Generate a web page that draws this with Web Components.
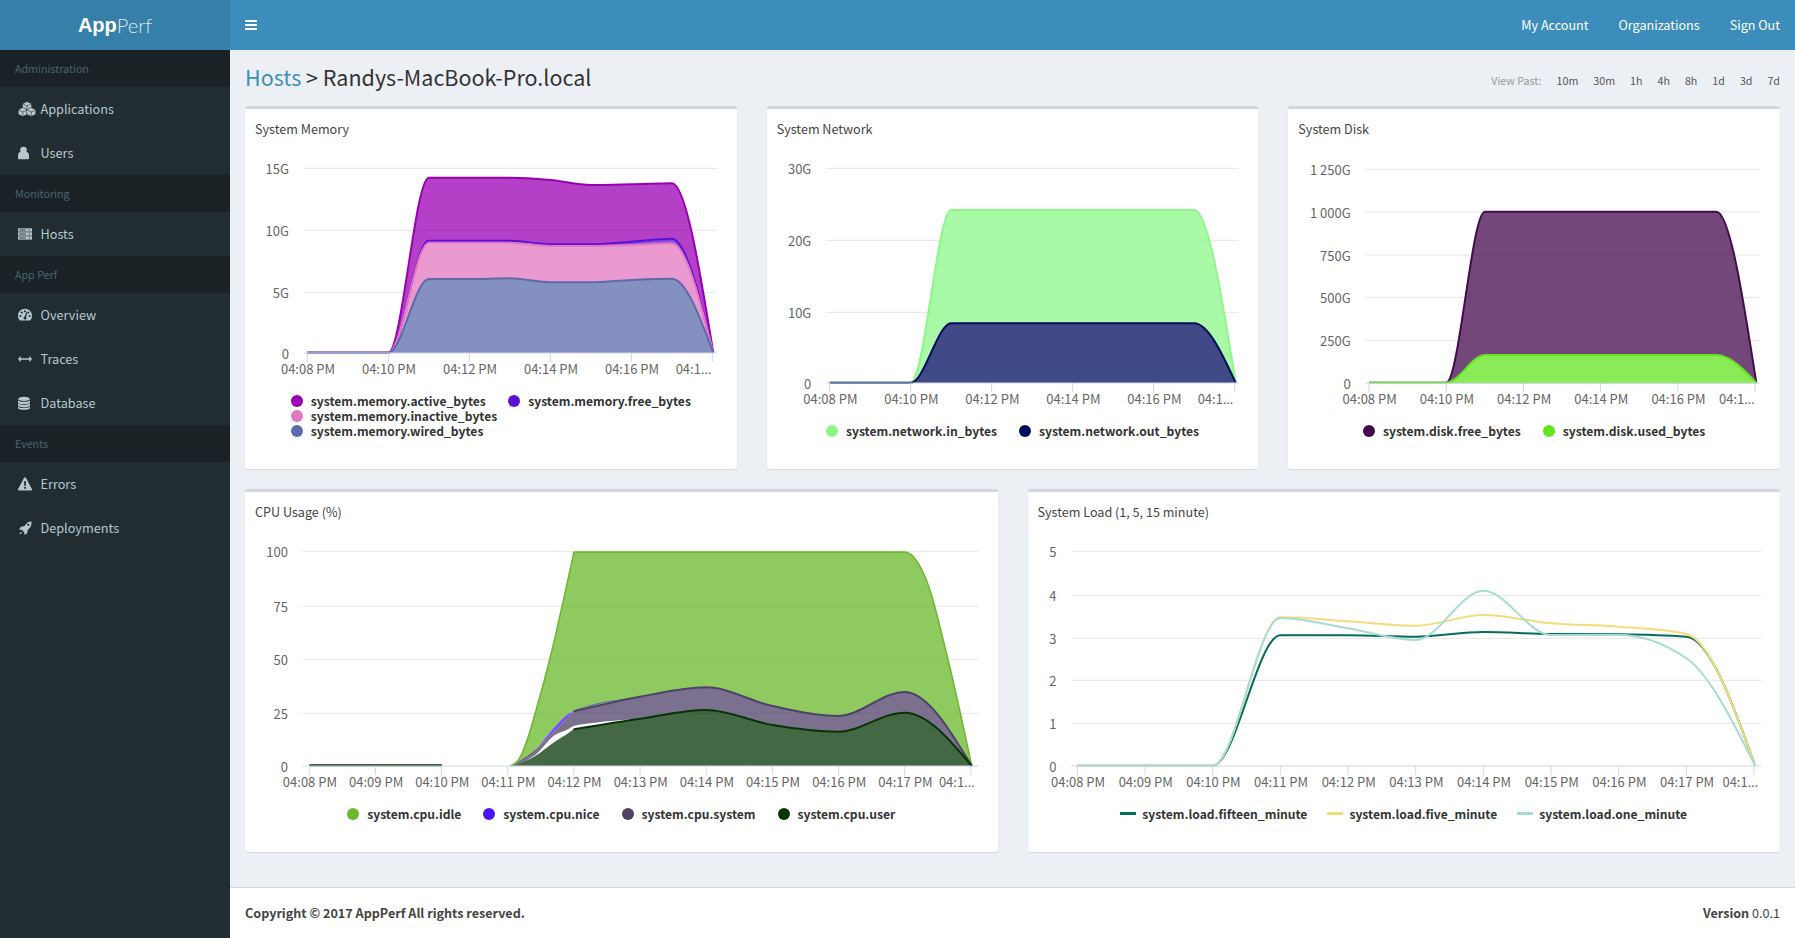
<!DOCTYPE html>
<html>
<head>
<meta charset="utf-8">
<title>AppPerf</title>
<style>
  html, body { margin: 0; height: 100%; overflow: hidden; }
  body { font: 12.6px/20px "Noto Sans CJK SC", "Noto Sans", sans-serif; color: #333; background: #ecf0f5; }
</style>
</head>
<body>
<app-shell>
  <side-nav slot="side">
    <nav-header>Administration</nav-header>
    <nav-item icon="cubes">Applications</nav-item>
    <nav-item icon="user">Users</nav-item>
    <nav-header>Monitoring</nav-header>
    <nav-item icon="server">Hosts</nav-item>
    <nav-header>App Perf</nav-header>
    <nav-item icon="gauge">Overview</nav-item>
    <nav-item icon="arrows">Traces</nav-item>
    <nav-item icon="database">Database</nav-item>
    <nav-header>Events</nav-header>
    <nav-item icon="warning">Errors</nav-item>
    <nav-item icon="rocket">Deployments</nav-item>
  </side-nav>
  <top-bar slot="top"></top-bar>
  <page-header><a slot="link">Hosts</a> &gt; Randys-MacBook-Pro.local</page-header>
  <chart-row columns="3">
    <chart-card heading="System Memory" chart="memory"></chart-card>
    <chart-card heading="System Network" chart="network"></chart-card>
    <chart-card heading="System Disk" chart="disk"></chart-card>
  </chart-row>
  <chart-row columns="2">
    <chart-card heading="CPU Usage (%)" chart="cpu"></chart-card>
    <chart-card heading="System Load (1, 5, 15 minute)" chart="load"></chart-card>
  </chart-row>
  <page-footer slot="footer"></page-footer>
</app-shell>

<script>
// icons for the sidebar
function cube(cx, cy, r) {
  const h = r * 0.5;
  return `<path d="M${cx} ${cy - r}L${cx + r} ${cy - h}V${cy + h}L${cx} ${cy + r}L${cx - r} ${cy + h}V${cy - h}Z" fill="currentColor" stroke="#222d32" stroke-width=".6"/>
    <path d="M${cx - r} ${cy - h}L${cx} ${cy}L${cx + r} ${cy - h}M${cx} ${cy}V${cy + r}" fill="none" stroke="#222d32" stroke-width=".6"/>`;
}
const ICONS = {
  cubes: `<svg width="18" height="16" viewBox="0 0 18 16">${cube(9, 5, 4.6)}${cube(4.8, 11, 4.6)}${cube(13.2, 11, 4.6)}</svg>`,
  user: `<svg width="18" height="16" viewBox="0 0 18 16"><g transform="translate(0 1)"><circle cx="5.500" cy="4" r="3.300" fill="currentColor"/><path d="M0 12v-2.400c0-2 1-3.500 2.500-3.800.8.700 1.800 1.100 3 1.100s2.200-.4 3-1.100c1.500.3 2.500 1.800 2.500 3.800V12c0 .8-.6 1.300-1.300 1.300H1.300C.6 13.300 0 12.800 0 12z" fill="currentColor"/></g></svg>`,
  server: `<svg width="18" height="16" viewBox="0 0 18 16"><g fill="currentColor"><rect x="0" y="2.300" width="14" height="3.300"/><rect x="0" y="6.300" width="14" height="3.300"/><rect x="0" y="10.300" width="14" height="3.300"/></g><g fill="#222d32"><rect x="1.300" y="3.500" width="6.500" height=".9"/><rect x="1.300" y="7.500" width="6.500" height=".9"/><rect x="1.300" y="11.500" width="6.500" height=".9"/><rect x="10.800" y="3.500" width="1.200" height=".9"/><rect x="10.800" y="7.500" width="1.200" height=".9"/><rect x="10.800" y="11.500" width="1.200" height=".9"/></g></svg>`,
  gauge: `<svg width="18" height="16" viewBox="0 0 18 16"><path d="M7 1.800C3.100 1.800 0 4.900 0 8.800c0 1.700.6 3.200 1.600 4.400.2.200.4.300.7.300h9.400c.3 0 .5-.1.700-.3 1-1.200 1.600-2.700 1.600-4.400 0-3.900-3.100-7-7-7z" fill="currentColor"/><g fill="#222d32"><circle cx="2.400" cy="9" r="1"/><circle cx="3.800" cy="5.500" r="1"/><circle cx="7" cy="4.200" r="1"/><circle cx="11.600" cy="9" r="1"/><circle cx="10.200" cy="5.500" r="1"/><circle cx="7" cy="11" r="1.500"/><path d="M6.300 10.800L8.300 5.300l1 .3-1.600 5.600z"/></g></svg>`,
  arrows: `<svg width="18" height="16" viewBox="0 0 18 16"><path d="M0 8l2.700-3.200v2.500h8.600V4.800L14 8l-2.700 3.200V8.700H2.700v2.500z" fill="currentColor"/></svg>`,
  database: `<svg width="18" height="16" viewBox="0 0 18 16"><g fill="currentColor" transform="translate(0 1.300) scale(1 .86)"><ellipse cx="6" cy="3" rx="6" ry="2.400"/><path d="M0 4.500C1 5.800 3.500 6.400 6 6.400s5-.6 6-1.900v2.300c0 1.300-2.700 2.400-6 2.400S0 8.100 0 6.800z"/><path d="M0 8.200c1 1.300 3.500 1.900 6 1.900s5-.6 6-1.900v2.300c0 1.300-2.700 2.400-6 2.400S0 11.800 0 10.500z"/><path d="M0 11.800c1 1.300 3.500 1.900 6 1.900s5-.6 6-1.900v1.700c0 1.300-2.700 2.200-6 2.200S0 14.800 0 13.500z"/></g></svg>`,
  warning: `<svg width="18" height="16" viewBox="0 0 18 16"><path d="M7 1.200c.4 0 .7.200.9.500l6 11.300c.4.700-.1 1.500-.9 1.500H1c-.8 0-1.300-.8-.9-1.500l6-11.300c.2-.3.500-.5.900-.5z" fill="currentColor"/><path d="M6 5.200h2l-.3 4.900H6.300zM6.100 11h1.800v1.800H6.100z" fill="#222d32"/></svg>`,
  rocket: `<svg width="18" height="16" viewBox="0 0 18 16"><path d="M13.500 1.500c.3 2.700-.5 5.300-2.500 7.300l-1.300 1.200-.5 3.200-2.700 1.900-.3-2.900-2.400-2.400-2.800-.3 1.900-2.700 3.200-.5 1.300-1.200C8.400 3 11 1.300 13.500 1.500z" fill="currentColor"/><path d="M2.800 11.700l1.300 1.300-2.800 1.500z" fill="currentColor"/><circle cx="10.300" cy="4.800" r="1.100" fill="#222d32"/></svg>`
};

// d3 style monotone curve, returns bezier segments
function monoSegments(pts) {
  const n = pts.length, segs = [];
  if (n < 2) return segs;
  const sl = [];
  for (let i = 0; i < n - 1; i++) sl.push((pts[i + 1][1] - pts[i][1]) / (pts[i + 1][0] - pts[i][0]));
  const t = new Array(n);
  for (let i = 1; i < n - 1; i++) {
    const h0 = pts[i][0] - pts[i - 1][0], h1 = pts[i + 1][0] - pts[i][0];
    const p = (sl[i - 1] * h1 + sl[i] * h0) / (h0 + h1);
    t[i] = (Math.sign(sl[i - 1]) + Math.sign(sl[i])) * Math.min(Math.abs(sl[i - 1]), Math.abs(sl[i]), 0.5 * Math.abs(p)) || 0;
  }
  if (n === 2) { t[0] = t[1] = sl[0]; }
  else {
    t[0] = (3 * sl[0] - t[1]) / 2;
    t[n - 1] = (3 * sl[n - 2] - t[n - 2]) / 2;
  }
  for (let i = 0; i < n - 1; i++) {
    const d = (pts[i + 1][0] - pts[i][0]) / 3;
    segs.push([pts[i], [pts[i][0] + d, pts[i][1] + d * t[i]], [pts[i + 1][0] - d, pts[i + 1][1] - d * t[i + 1]], pts[i + 1]]);
  }
  return segs;
}
const fmt = p => p[0].toFixed(1) + ' ' + p[1].toFixed(1);
function forwardPath(runs) {
  let d = '';
  runs.forEach(run => monoSegments(run).forEach(s => { d += `C${fmt(s[1])} ${fmt(s[2])} ${fmt(s[3])}`; }));
  return d;
}
function backwardPath(runs) {
  let d = '';
  runs.slice().reverse().forEach(run => monoSegments(run).reverse().forEach(s => { d += `C${fmt(s[2])} ${fmt(s[1])} ${fmt(s[0])}`; }));
  return d;
}

// everything is measured in crop pixels: ox/oy crop origin, sx/sy crop scale, cx/cy card corner
const LABELS_2 = ['04:08 PM', '04:10 PM', '04:12 PM', '04:14 PM', '04:16 PM'];
const LABELS_1 = ['04:08 PM', '04:09 PM', '04:10 PM', '04:11 PM', '04:12 PM', '04:13 PM', '04:14 PM', '04:15 PM', '04:16 PM', '04:17 PM'];

const IDLE_TOP = [
  [[550, 858], [567, 840], [587, 770], [601, 700], [632, 530], [660, 350], [680, 216]],
  [[680, 216], [1353, 216], [1372, 232], [1400, 310], [1440, 530], [1490, 858]]
];
const SYS_TOP = [[679, 694], [815, 650], [949, 622], [1084, 678], [1218, 708], [1353, 636], [1490, 858]];
const USER_TOP = [[679, 748], [815, 716], [949, 690], [1084, 735], [1218, 755], [1353, 698], [1490, 858]];

const CHARTS = {
  memory: {
    ox: 230, oy: 50, sx: 3, sy: 3, cx: 245, cy: 106,
    grid: [[355, '15G'], [541, '10G'], [727, '5G'], [909, '0']], gx0: 222, gx1: 1460,
    tick0: 232, tick: 243, perTick: 2, end: 1450, base: 909, labels: LABELS_2, lastTick: 1447, lastStart: 1337,
    legendCols: 2, legendGap: 11,
    series: [
      { name: 'system.memory.active_bytes', color: '#9900b3', ys: [908, 908, 383, 383, 383, 390, 405, 403, 400, 908], under: 'free', id: 'active' },
      { name: 'system.memory.free_bytes', color: '#5c0fd6', ys: [908, 908, 572, 572, 572, 583, 583, 575, 566, 908], under: 'inactive', id: 'free' },
      { name: 'system.memory.inactive_bytes', color: '#e377c2', ys: [908, 908, 578, 578, 578, 588, 588, 585, 580, 908], under: 'wired', id: 'inactive' },
      { name: 'system.memory.wired_bytes', color: '#5b6ba9', ys: [908, 908, 687, 687, 685, 697, 697, 690, 686, 908], id: 'wired', newRow: true }
    ]
  },
  network: {
    ox: 760, oy: 100, sx: 3, sy: 3, cx: 766.67, cy: 106,
    grid: [[205, '30G'], [421, '20G'], [637, '10G'], [849, '0']], gx0: 198, gx1: 1437,
    tick0: 208, tick: 243, perTick: 2, end: 1426, base: 849, labels: LABELS_2, lastTick: 1423, lastStart: 1312,
    legendCols: 2, legendGap: 22,
    series: [
      { name: 'system.network.in_bytes', color: '#8cf88a', ys: [848, 848, 330, 330, 330, 330, 330, 330, 330, 848], under: 'out', id: 'in' },
      { name: 'system.network.out_bytes', color: '#000e5e', ys: [848, 848, 670, 670, 670, 670, 670, 670, 670, 848], id: 'out' }
    ]
  },
  disk: {
    ox: 1280, oy: 0, sx: 3, sy: 3, cx: 1288.33, cy: 106,
    grid: [[508, '1 250G'], [636, '1 000G'], [765, '750G'], [892, '500G'], [1021, '250G'], [1150, '0']], gx0: 258, gx1: 1440,
    tick0: 268, tick: 231.6, perTick: 2, end: 1430, base: 1150, labels: LABELS_2, lastTick: 1426, lastStart: 1318,
    legendCols: 2, legendGap: 22,
    series: [
      { name: 'system.disk.free_bytes', color: '#45094f', ys: [1148, 1148, 635, 635, 635, 635, 635, 635, 635, 1148], under: 'used', id: 'free' },
      { name: 'system.disk.used_bytes', color: '#62e51d', ys: [1148, 1148, 1065, 1065, 1065, 1065, 1065, 1065, 1065, 1148], id: 'used' }
    ]
  },
  cpu: {
    ox: 240, oy: 480, sx: 2.036, sy: 3, cx: 245, cy: 489,
    grid: [[214, '100'], [379, '75'], [538, '50'], [700, '25'], [858, '0']], gx0: 128, gx1: 1503,
    tick0: 141, tick: 134.7, perTick: 1, end: 1490, base: 858, labels: LABELS_1, lastTick: 1488, lastStart: 1423,
    legendCols: 4, legendGap: 22,
    custom: [
      { name: 'system.cpu.idle', color: '#6ab82b', top: IDLE_TOP,
        bottom: [[[550, 858], [601, 810], [641, 740], [668, 702], [679, 694]], SYS_TOP],
        line: IDLE_TOP },
      { name: 'system.cpu.nice', color: '#4a14ff',
        top: [[[553, 857], [601, 810], [641, 740], [668, 702], [679, 693], [723, 672], [800, 655]]],
        bottom: [[[553, 857], [594, 818], [641, 752], [668, 712], [679, 695], [723, 674], [800, 655]]] },
      { name: 'system.cpu.system', color: '#4f4269',
        top: [[[553, 857], [594, 818], [641, 752], [668, 712], [679, 695]], SYS_TOP],
        bottom: [[[553, 857], [601, 825], [641, 765], [668, 748], [679, 738], [723, 728], [800, 717], [870, 705], [949, 690], [1084, 735], [1218, 755], [1353, 698], [1490, 858]]],
        line: [SYS_TOP] },
      { name: 'system.cpu.user', color: '#063505',
        top: [[[553, 858], [601, 828], [641, 785], [668, 760], [679, 748]], USER_TOP],
        line: [USER_TOP, [[141, 856], [411, 856]]] }
    ]
  },
  load: {
    ox: 1020, oy: 480, sx: 2.023, sy: 3, cx: 1027.5, cy: 489,
    grid: [[214, '5'], [346, '4'], [475, '3'], [601, '2'], [730, '1'], [858, '0']], gx0: 103, gx1: 1499,
    tick0: 115, tick: 136.9, perTick: 1, end: 1486, base: 858, labels: LABELS_1, lastTick: 1484, lastStart: 1420,
    legendCols: 3, legendGap: 20, lines: true,
    series: [
      { name: 'system.load.fifteen_minute', color: '#046d5b', ys: [857, 857, 857, 466, 466, 470, 456, 462, 463, 470, 857], minutes: true },
      { name: 'system.load.five_minute', color: '#f5dc7a', ys: [857, 857, 857, 412, 424, 437, 405, 430, 440, 462, 857], minutes: true },
      { name: 'system.load.one_minute', color: '#a5ddd0', ys: [857, 857, 857, 414, 445, 480, 332, 465, 465, 535, 857], minutes: true }
    ]
  }
};

class AppShell extends HTMLElement {
  constructor() {
    super();
    this.attachShadow({ mode: 'open' }).innerHTML = `
      <style>
        :host { display: grid; grid-template-columns: 230px 1fr; grid-template-rows: 50px 1fr auto; height: 100vh; }
        .side { grid-row: 1 / 4; display: flex; flex-direction: column; background: #222d32; }
        .logo { height: 50px; background: #367fa9; color: #fff; display: flex; justify-content: center; align-items: center; font-size: 20px; }
        .logo b { font: 700 20px "Liberation Sans", sans-serif; }
        .logo span { font: 300 20px Lato, sans-serif; color: #dbe9f2; }
        main { padding: 0 15px; min-height: 0; }
      </style>
      <div class="side">
        <div class="logo"><b>App</b><span>Perf</span></div>
        <slot name="side"></slot>
      </div>
      <slot name="top"></slot>
      <main><slot></slot></main>
      <slot name="footer"></slot>`;
  }
}

class SideNav extends HTMLElement {
  constructor() {
    super();
    this.attachShadow({ mode: 'open' }).innerHTML = `
      <style>:host { display: flex; flex-direction: column; }</style><slot></slot>`;
  }
}

class NavHeader extends HTMLElement {
  constructor() {
    super();
    this.attachShadow({ mode: 'open' }).innerHTML = `
      <style>:host { display: block; background: #1a2226; color: #4b646f; font-size: 10.7px; line-height: 17px; padding: 10px 25px 10px 15px; }</style><slot></slot>`;
  }
}

class NavItem extends HTMLElement {
  constructor() {
    super();
    this.attachShadow({ mode: 'open' });
  }
  connectedCallback() {
    this.shadowRoot.innerHTML = `
      <style>
        :host { display: flex; align-items: center; height: 44px; padding-left: 18px; color: #b8c7ce; font-size: 12.7px; }
        .icon { width: 22.5px; height: 16px; flex: none; }
        svg { display: block; }
      </style>
      <span class="icon">${ICONS[this.getAttribute('icon')] || ''}</span><slot></slot>`;
  }
}

class TopBar extends HTMLElement {
  constructor() {
    super();
    this.attachShadow({ mode: 'open' }).innerHTML = `
      <style>
        :host { display: flex; align-items: center; height: 50px; background: #3c8dbc; color: #fff; padding: 0 15px; }
        .toggle { width: 12px; height: 10px; }
        nav { margin-left: auto; display: flex; gap: 30px; }
      </style>
      <svg class="toggle" viewBox="0 0 12 10"><path d="M0 0h12v2H0zM0 4h12v2H0zM0 8h12v2H0z" fill="#fff"/></svg>
      <nav><span>My Account</span><span>Organizations</span><span>Sign Out</span></nav>`;
  }
}

class PageHeader extends HTMLElement {
  constructor() {
    super();
    this.attachShadow({ mode: 'open' }).innerHTML = `
      <style>
        :host { display: flex; justify-content: space-between; align-items: center; padding-top: 15px; margin-bottom: 15px; }
        h1 { margin: 0; font-size: 21.5px; font-weight: 400; line-height: 26px; color: #333; position: relative; top: -1px; }
        ::slotted(a) { color: #3c8dbc; }
        .past { display: flex; gap: 15px; font-size: 10.7px; line-height: 17px; color: #555; margin-top: 5px; }
        .past span:first-child { color: #999; }
      </style>
      <h1><slot name="link"></slot><slot></slot></h1>
      <div class="past">
        <span>View Past:</span><span>10m</span><span>30m</span><span>1h</span><span>4h</span><span>8h</span><span>1d</span><span>3d</span><span>7d</span>
      </div>`;
  }
}

class ChartRow extends HTMLElement {
  constructor() {
    super();
    this.attachShadow({ mode: 'open' });
  }
  connectedCallback() {
    this.shadowRoot.innerHTML = `
      <style>
        :host { display: grid; grid-template-columns: repeat(${this.getAttribute('columns')}, 1fr); gap: 30px; margin-bottom: 20px; }
      </style><slot></slot>`;
  }
}

class ChartCard extends HTMLElement {
  constructor() {
    super();
    this.attachShadow({ mode: 'open' });
  }
  connectedCallback() {
    const c = CHARTS[this.getAttribute('chart')];
    const heading = this.getAttribute('heading');
    this.shadowRoot.innerHTML = `
      <style>
        :host { display: flex; flex-direction: column; height: 363px; box-sizing: border-box; background: #fff; border-top: 3px solid #d2d6de; border-radius: 3px; box-shadow: 0 1px 1px rgba(0,0,0,.1); }
        h3 { margin: 0; padding: 10px 10px 0; font-size: 12.6px; font-weight: 400; line-height: 20px; color: #444; height: 31px; }
        svg.plot { display: block; flex: 1; min-height: 0; width: 100%; overflow: visible; }
        svg.plot text { font-size: 13px; fill: #666; }
        .legend { display: grid; grid-template-columns: repeat(${c.legendCols}, auto); justify-content: center; column-gap: ${c.legendGap}px; margin-bottom: 31px; line-height: 15px; font-weight: 700; font-size: 12.1px; color: #333; }
        .legend div { display: flex; align-items: center; gap: 8px; white-space: nowrap; height: 15px; }
        .dot { width: 12px; height: 12px; border-radius: 50%; flex: none; }
        .dash { width: 16px; height: 2.5px; flex: none; margin-right: -2px; }
      </style>
      <h3>${heading}</h3>
      ${this.plot(c)}
      <div class="legend">${this.legend(c)}</div>`;
  }
  legend(c) {
    const items = c.series || c.custom;
    return items.map(s => `<div${s.newRow ? ' style="grid-column:1"' : ''}><span class="${c.lines ? 'dash' : 'dot'}" style="background:${s.color}"></span>${s.name}</div>`).join('');
  }
  plot(c) {
    // crop pixels to the card's svg pixels (the svg starts 44px under the card's top)
    const X = x => c.ox + x / c.sx - c.cx;
    const Y = y => c.oy + y / c.sy - c.cy - 44;
    const P = p => [X(p[0]), Y(p[1])];
    let out = '';
    c.grid.forEach(([y, label], i) => {
      if (i < c.grid.length - 1) out += `<path d="M${X(c.gx0)} ${Y(y)}H${X(c.gx1)}" stroke="#e6e6e6"/>`;
      out += `<text x="${X(c.gx0) - 15}" y="${Y(y) + 5.5}" text-anchor="end">${label}</text>`;
    });
    const axisY = Y(c.base);
    const tickXs = c.labels.map((_, i) => c.tick0 + i * c.tick);
    const runsToD = (top, bottom) => {
      const t = top.map(r => r.map(P));
      let d = `M${fmt(t[0][0])}` + forwardPath(t);
      if (bottom) {
        const b = bottom.map(r => r.map(P));
        const lastRun = b[b.length - 1];
        d += `L${fmt(lastRun[lastRun.length - 1])}` + backwardPath(b) + 'Z';
      } else {
        d += `V${axisY}H${t[0][0][0].toFixed(1)}Z`;
      }
      return d;
    };
    if (c.custom) {
      c.custom.forEach(s => {
        out += `<path d="${runsToD(s.top, s.bottom)}" fill="${s.color}" fill-opacity=".75"/>`;
      });
      c.custom.forEach(s => {
        (s.line || []).forEach(run => {
          const r = run.map(P);
          out += `<path d="M${fmt(r[0])}${forwardPath([r])}" fill="none" stroke="${s.color}" stroke-width="${s.name.endsWith('idle') ? 1.5 : 2}"/>`;
        });
      });
    } else {
      const step = c.tick / c.perTick;
      const pts = s => s.ys.map((y, i) => {
        const n = s.minutes ? i : i + 1;
        return [i === s.ys.length - 1 ? c.end : c.tick0 + n * step, y];
      });
      const byId = {};
      c.series.forEach(s => { byId[s.id] = s; });
      if (!c.lines) {
        c.series.forEach(s => {
          const bottom = s.under ? [pts(byId[s.under])] : null;
          out += `<path d="${runsToD([pts(s)], bottom)}" fill="${s.color}" fill-opacity=".75"/>`;
        });
      }
      c.series.forEach(s => {
        const r = pts(s).map(P);
        const flat = s.minutes ? '' : `M${X(c.tick0)} ${r[0][1]}H${r[0][0]}`;
        out += `<path d="${flat}M${fmt(r[0])}${forwardPath([r])}" fill="none" stroke="${s.color}" stroke-width="2"/>`;
      });
    }
    // axis
    out += `<path d="M${X(c.gx0)} ${axisY}H${X(c.gx1)}" stroke="#ccd6eb"/>`;
    tickXs.concat([c.lastTick]).forEach(x => {
      out += `<path d="M${X(x)} ${axisY}v9" stroke="#ccd6eb"/>`;
    });
    c.labels.forEach((l, i) => {
      out += `<text x="${X(tickXs[i]) + 0.7}" y="${axisY + 20.5}" text-anchor="middle">${l}</text>`;
    });
    out += `<text x="${X(c.lastStart)}" y="${axisY + 20.5}">04:1<tspan font-family="Noto Sans">…</tspan></text>`;
    return `<svg class="plot">${out}</svg>`;
  }
}

class PageFooter extends HTMLElement {
  constructor() {
    super();
    this.attachShadow({ mode: 'open' }).innerHTML = `
      <style>
        :host { grid-column: 2; display: flex; justify-content: space-between; align-items: center; height: 50px; padding: 0 15px; background: #fff; border-top: 1px solid #d2d6de; color: #444; }
        b { font-weight: 700; }
      </style>
      <b>Copyright © 2017 AppPerf All rights reserved.</b>
      <span><b>Version</b> 0.0.1</span>`;
  }
}

customElements.define('app-shell', AppShell);
customElements.define('side-nav', SideNav);
customElements.define('nav-header', NavHeader);
customElements.define('nav-item', NavItem);
customElements.define('top-bar', TopBar);
customElements.define('page-header', PageHeader);
customElements.define('chart-row', ChartRow);
customElements.define('chart-card', ChartCard);
customElements.define('page-footer', PageFooter);
</script>
</body>
</html>
